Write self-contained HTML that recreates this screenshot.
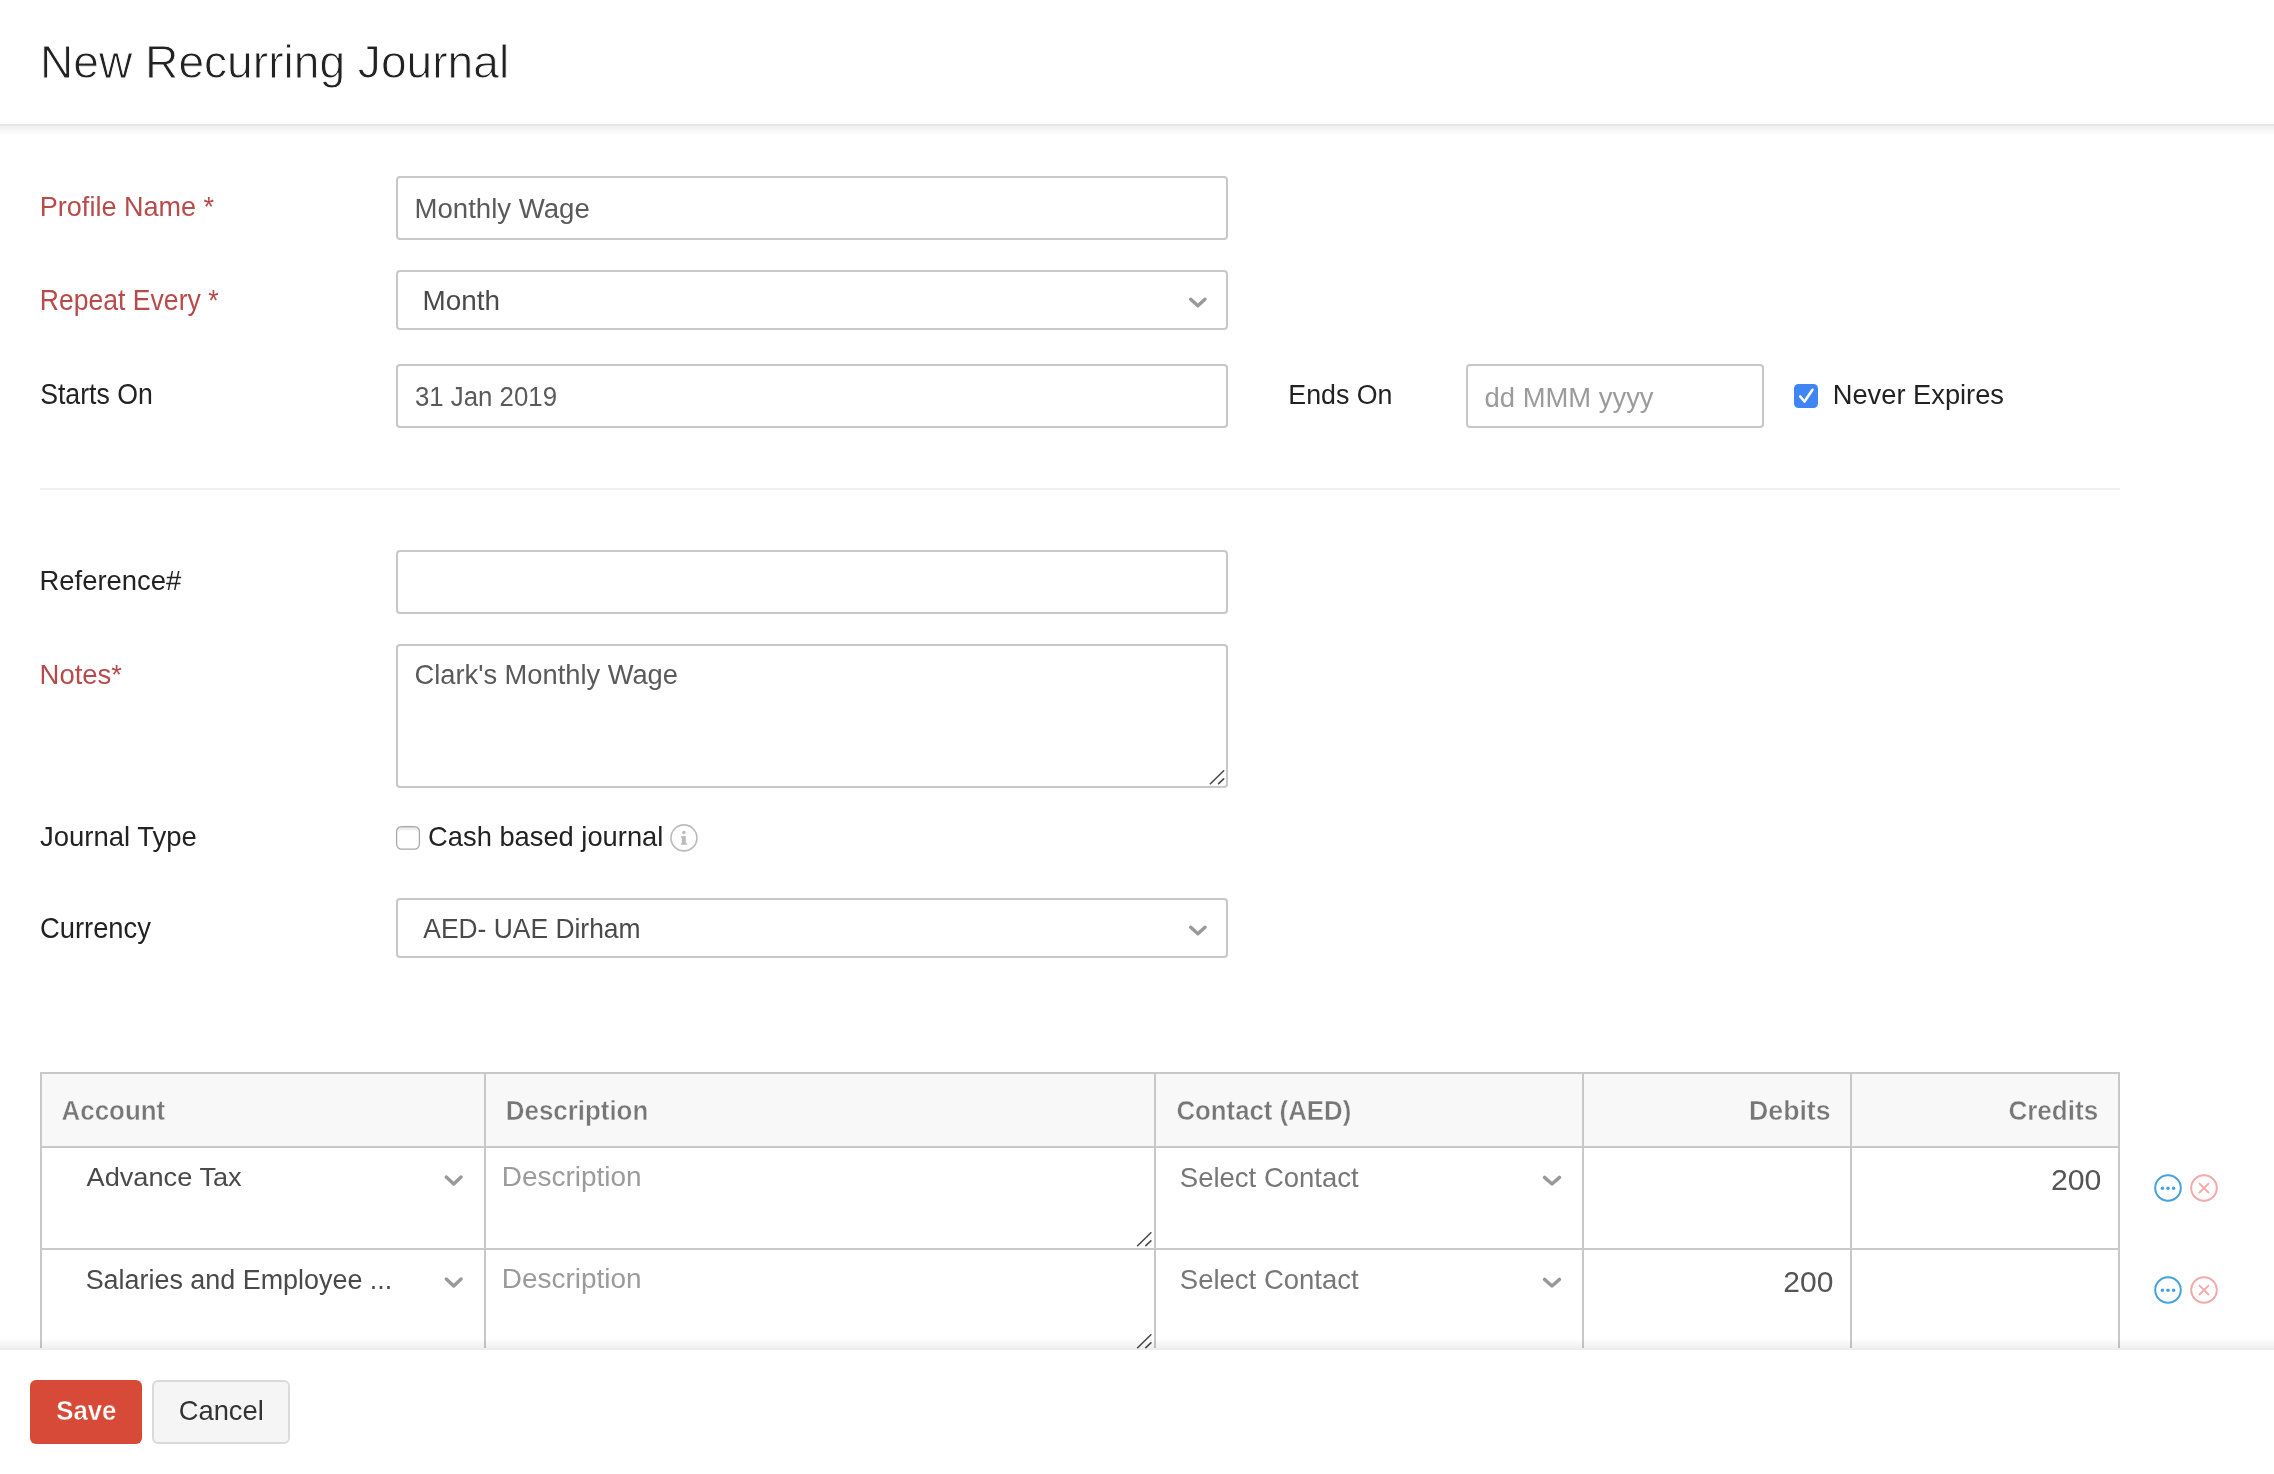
<!DOCTYPE html>
<html><head><meta charset="utf-8"><title>New Recurring Journal</title>
<style>
html,body{margin:0;padding:0;background:#fff;width:2274px;height:1474px;overflow:hidden;position:relative;font-family:"Liberation Sans",sans-serif}
.box{position:absolute;box-sizing:border-box;border:2px solid #c8c8c8;border-radius:4px;background:#fff}
svg{position:absolute;left:0;top:0;will-change:transform}
text{font-family:"Liberation Sans",sans-serif;white-space:pre}
#footer{position:absolute;left:0;top:1350px;width:2274px;height:124px;background:#fff}
#fshadow{position:absolute;left:0;top:1338px;width:2274px;height:12px;background:linear-gradient(rgba(0,0,0,0),rgba(0,0,0,0.075))}
#save{position:absolute;left:30px;top:1380px;width:112px;height:64px;background:#d64a37;border-radius:6px}
#cancel{position:absolute;left:152px;top:1380px;width:138px;height:64px;box-sizing:border-box;background:#f5f5f5;border:2px solid #dadada;border-radius:6px}
</style></head><body>
<div style="position:absolute;left:0;top:0;width:2274px;height:124px;background:#fff"></div><div style="position:absolute;left:0;top:124px;width:2274px;height:2px;background:#e6e6e6"></div><div style="position:absolute;left:0;top:126px;width:2274px;height:9px;background:linear-gradient(#f1f1f1,#fefefe)"></div><div class="box" style="left:396px;top:176px;width:832px;height:64px;"></div><div class="box" style="left:396px;top:270px;width:832px;height:60px;"></div><div class="box" style="left:396px;top:364px;width:832px;height:64px;"></div><div class="box" style="left:1466px;top:364px;width:298px;height:64px;"></div><div class="box" style="left:396px;top:550px;width:832px;height:64px;"></div><div class="box" style="left:396px;top:644px;width:832px;height:144px;"></div><div class="box" style="left:396px;top:898px;width:832px;height:60px;"></div><div style="position:absolute;left:40px;top:488px;width:2080px;height:2px;background:#f0f0f0"></div><div style="position:absolute;left:40px;top:1072px;width:2080px;height:76px;background:#f8f8f8"></div><div style="position:absolute;left:40px;top:1072px;width:2080px;height:2px;background:#c8c8c8"></div><div style="position:absolute;left:40px;top:1146px;width:2080px;height:2px;background:#c8c8c8"></div><div style="position:absolute;left:40px;top:1248px;width:2080px;height:2px;background:#c8c8c8"></div><div style="position:absolute;left:40px;top:1072px;width:2px;height:276px;background:#c8c8c8"></div><div style="position:absolute;left:484px;top:1072px;width:2px;height:276px;background:#c8c8c8"></div><div style="position:absolute;left:1154px;top:1072px;width:2px;height:276px;background:#c8c8c8"></div><div style="position:absolute;left:1582px;top:1072px;width:2px;height:276px;background:#c8c8c8"></div><div style="position:absolute;left:1850px;top:1072px;width:2px;height:276px;background:#c8c8c8"></div><div style="position:absolute;left:2118px;top:1072px;width:2px;height:276px;background:#c8c8c8"></div>
<svg width="2274" height="1474" viewBox="0 0 2274 1474">
<polyline points="1190.70,299.20 1197.85,305.76 1205.00,299.20" fill="none" stroke="#999" stroke-width="3.4" stroke-linecap="round" stroke-linejoin="round"/><polyline points="1190.70,927.20 1197.85,933.76 1205.00,927.20" fill="none" stroke="#999" stroke-width="3.4" stroke-linecap="round" stroke-linejoin="round"/><polyline points="446.30,1177.00 453.70,1183.96 461.10,1177.00" fill="none" stroke="#999" stroke-width="3.4" stroke-linecap="round" stroke-linejoin="round"/><polyline points="1544.50,1177.40 1552.00,1183.96 1559.50,1177.40" fill="none" stroke="#999" stroke-width="3.4" stroke-linecap="round" stroke-linejoin="round"/><polyline points="446.30,1279.00 453.70,1285.96 461.10,1279.00" fill="none" stroke="#999" stroke-width="3.4" stroke-linecap="round" stroke-linejoin="round"/><polyline points="1544.50,1279.40 1552.00,1285.96 1559.50,1279.40" fill="none" stroke="#999" stroke-width="3.4" stroke-linecap="round" stroke-linejoin="round"/><line x1="1210.40" y1="783.70" x2="1223.70" y2="770.80" stroke="#4a4a4a" stroke-width="1.6" stroke-linecap="round"/><line x1="1218.60" y1="783.70" x2="1223.70" y2="778.90" stroke="#4a4a4a" stroke-width="1.6" stroke-linecap="round"/><line x1="1137.60" y1="1245.70" x2="1150.90" y2="1232.80" stroke="#4a4a4a" stroke-width="1.6" stroke-linecap="round"/><line x1="1145.80" y1="1245.70" x2="1150.90" y2="1240.90" stroke="#4a4a4a" stroke-width="1.6" stroke-linecap="round"/><line x1="1137.60" y1="1347.70" x2="1150.90" y2="1334.80" stroke="#4a4a4a" stroke-width="1.6" stroke-linecap="round"/><line x1="1145.80" y1="1347.70" x2="1150.90" y2="1342.90" stroke="#4a4a4a" stroke-width="1.6" stroke-linecap="round"/><rect x="1794" y="384" width="24" height="24" rx="4.5" fill="#3f86f4"/><polyline points="1800.2,396.5 1804.5,401.5 1812.5,389.8" fill="none" stroke="#fff" stroke-width="2.6" stroke-linecap="round" stroke-linejoin="round"/><defs><linearGradient id="cbg" x1="0" y1="0" x2="0" y2="1"><stop offset="0" stop-color="#dcdcdc"/><stop offset="0.22" stop-color="#fff"/><stop offset="1" stop-color="#fff"/></linearGradient></defs><rect x="396.6" y="826.6" width="22.8" height="22.6" rx="5" fill="url(#cbg)" stroke="#a9a9a9" stroke-width="1.3"/><circle cx="683.95" cy="837.9" r="13.0" fill="none" stroke="#bbb" stroke-width="1.6"/><circle cx="683.9" cy="832.6" r="1.75" fill="#bbb"/><path d="M680.6,837.4 Q681.2,836.1 683.2,836.1 H685.8 V843.2 H687.2 V844.8 H680.9 V843.2 H681.8 V837.9 Z" fill="#bbb"/><circle cx="2168" cy="1188" r="12.8" fill="none" stroke="#44a2dd" stroke-width="2"/><circle cx="2162.40" cy="1188.2" r="1.75" fill="#44a2dd"/><circle cx="2168.00" cy="1188.2" r="1.75" fill="#44a2dd"/><circle cx="2173.60" cy="1188.2" r="1.75" fill="#44a2dd"/><circle cx="2204" cy="1188" r="12.8" fill="none" stroke="#f4a8a8" stroke-width="2"/><path d="M2199,1183.2 L2209,1193 M2209,1183.2 L2199,1193" stroke="#f4a8a8" stroke-width="1.8" fill="none"/><circle cx="2168" cy="1290" r="12.8" fill="none" stroke="#44a2dd" stroke-width="2"/><circle cx="2162.40" cy="1290.2" r="1.75" fill="#44a2dd"/><circle cx="2168.00" cy="1290.2" r="1.75" fill="#44a2dd"/><circle cx="2173.60" cy="1290.2" r="1.75" fill="#44a2dd"/><circle cx="2204" cy="1290" r="12.8" fill="none" stroke="#f4a8a8" stroke-width="2"/><path d="M2199,1285.2 L2209,1295 M2209,1285.2 L2199,1295" stroke="#f4a8a8" stroke-width="1.8" fill="none"/>
<text transform="translate(40.00,77.80) scale(1,0.985)" x="0" y="0" font-size="46.136" fill="#222" font-weight="normal" stroke="#fff" stroke-width="0.9">New Recurring Journal</text><text x="39.79" y="216.10" font-size="27.052" fill="#b94a4a" font-weight="normal">Profile Name *</text><text x="414.55" y="218.00" font-size="27.582" fill="#5a5a5a" font-weight="normal">Monthly Wage</text><text transform="translate(39.82,309.90) scale(1,1.0862)" x="0" y="0" font-size="26.578" fill="#b94a4a" font-weight="normal">Repeat Every *</text><text x="422.62" y="309.90" font-size="27.864" fill="#4a4a4a" font-weight="normal">Month</text><text transform="translate(40.17,403.70) scale(1,1.0872)" x="0" y="0" font-size="26.667" fill="#222" font-weight="normal">Starts On</text><text transform="translate(414.89,406.00) scale(1,1.0914)" x="0" y="0" font-size="25.842" fill="#5a5a5a" font-weight="normal">31 Jan 2019</text><text x="1288.31" y="404.00" font-size="26.778" fill="#222" font-weight="normal">Ends On</text><text x="1484.54" y="406.60" font-size="27.429" fill="#9b9b9b" font-weight="normal">dd MMM yyyy</text><text x="1832.77" y="404.30" font-size="27.275" fill="#222" font-weight="normal">Never Expires</text><text x="39.56" y="590.20" font-size="27.422" fill="#222" font-weight="normal">Reference#</text><text transform="translate(39.55,684.20) scale(1,1.0321)" x="0" y="0" font-size="27.499" fill="#b94a4a" font-weight="normal">Notes*</text><text x="414.52" y="684.00" font-size="27.296" fill="#5a5a5a" font-weight="normal">Clark&#39;s Monthly Wage</text><text x="39.97" y="845.90" font-size="27.481" fill="#222" font-weight="normal">Journal Type</text><text x="428.12" y="845.90" font-size="27.305" fill="#222" font-weight="normal">Cash based journal</text><text transform="translate(39.92,938.00) scale(1,1.0541)" x="0" y="0" font-size="27.383" fill="#222" font-weight="normal">Currency</text><text transform="translate(423.30,938.00) scale(1,1.0324)" x="0" y="0" font-size="26.420" fill="#4a4a4a" font-weight="normal">AED- UAE Dirham</text><text transform="translate(61.60,1120.00) scale(1,1.0971)" x="0" y="0" font-size="25.908" fill="#777" font-weight="bold" stroke="#f8f8f8" stroke-width="0.4">Account</text><text transform="translate(505.78,1120.20) scale(1,1.0481)" x="0" y="0" font-size="25.918" fill="#777" font-weight="bold" stroke="#f8f8f8" stroke-width="0.4">Description</text><text transform="translate(1176.39,1120.00) scale(1,1.0378)" x="0" y="0" font-size="25.812" fill="#777" font-weight="bold" stroke="#f8f8f8" stroke-width="0.4">Contact (AED)</text><text transform="translate(1749.03,1120.00) scale(1,1.0378)" x="0" y="0" font-size="26.684" fill="#777" font-weight="bold" stroke="#f8f8f8" stroke-width="0.4">Debits</text><text transform="translate(2008.38,1120.00) scale(1,1.0378)" x="0" y="0" font-size="26.085" fill="#777" font-weight="bold" stroke="#f8f8f8" stroke-width="0.4">Credits</text><text transform="translate(86.50,1186.40) scale(1,0.9648)" x="0" y="0" font-size="27.211" fill="#4a4a4a" font-weight="normal">Advance Tax</text><text x="501.72" y="1185.80" font-size="27.960" fill="#9b9b9b" font-weight="normal">Description</text><text transform="translate(1179.84,1186.60) scale(1,1.0366)" x="0" y="0" font-size="27.503" fill="#777" font-weight="normal">Select Contact</text><text x="2050.98" y="1190.00" font-size="30.250" fill="#555" font-weight="normal">200</text><text x="85.66" y="1288.60" font-size="26.922" fill="#4a4a4a" font-weight="normal">Salaries and Employee ...</text><text x="501.72" y="1287.80" font-size="27.960" fill="#9b9b9b" font-weight="normal">Description</text><text transform="translate(1179.84,1288.50) scale(1,1.02)" x="0" y="0" font-size="27.503" fill="#777" font-weight="normal">Select Contact</text><text x="1783.29" y="1291.80" font-size="30.000" fill="#555" font-weight="normal">200</text>
</svg>
<div id="fshadow"></div>
<div id="footer"></div>
<div id="save"></div>
<div id="cancel"></div>
<svg width="2274" height="1474" viewBox="0 0 2274 1474" style="pointer-events:none">
<text transform="translate(56.30,1420.20) scale(1,1.096)" x="0" y="0" font-size="25.753" fill="#fff" font-weight="bold" stroke="#d64a37" stroke-width="0.35">Save</text><text x="178.72" y="1420.20" font-size="27.333" fill="#333" font-weight="normal">Cancel</text>
</svg>
</body></html>
